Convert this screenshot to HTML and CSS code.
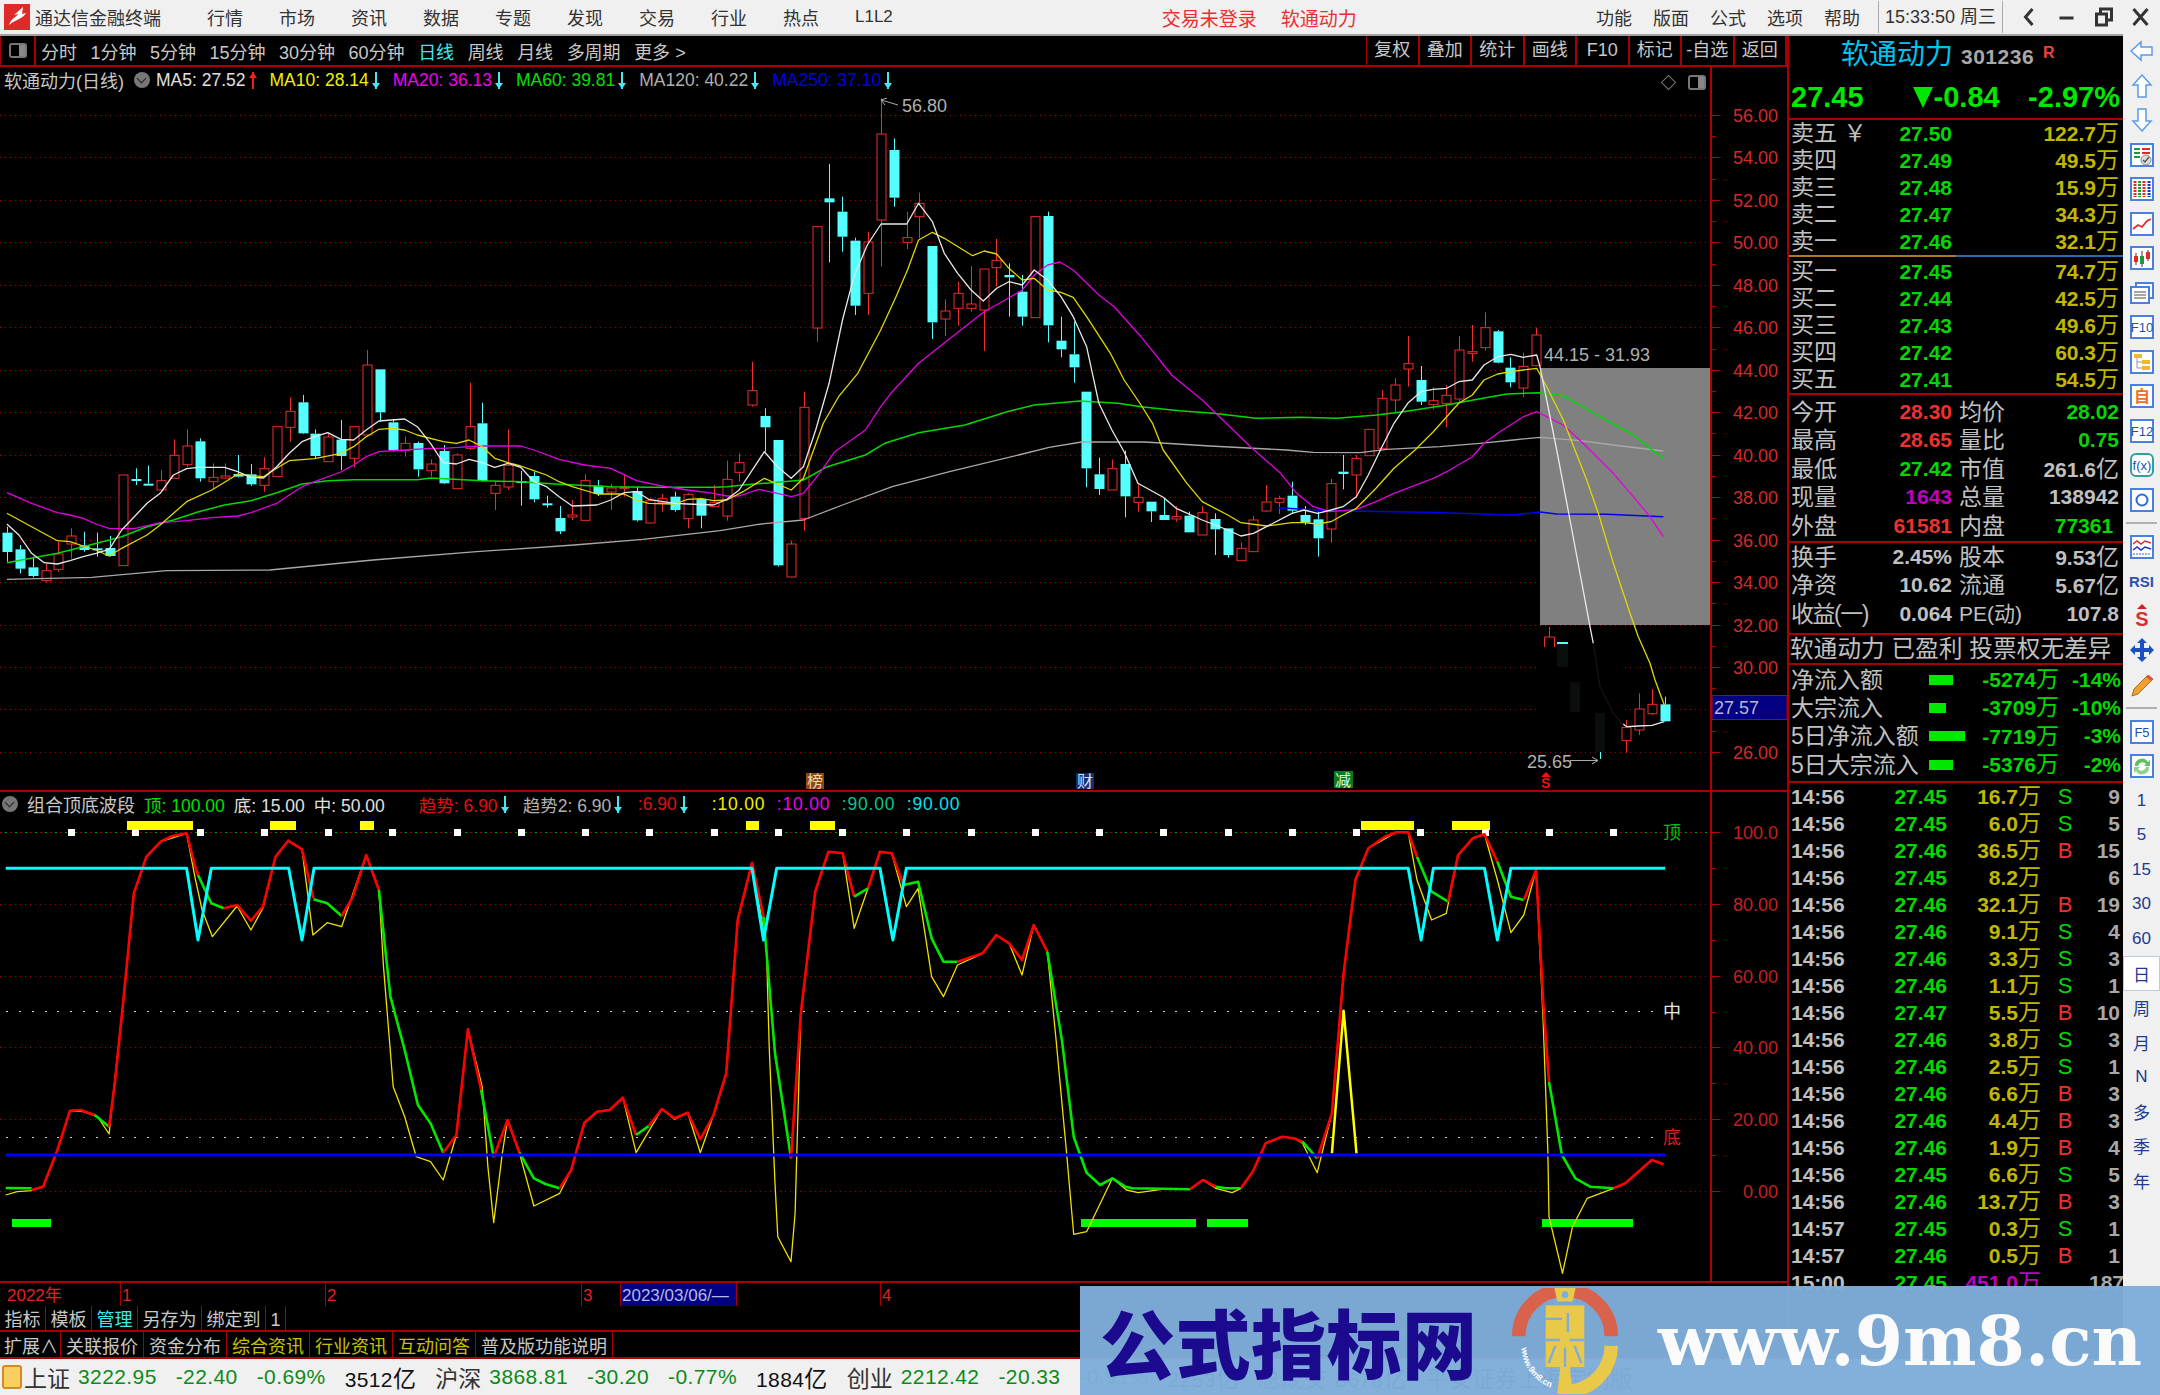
FILE: index.html
```html
<!DOCTYPE html>
<html lang="zh-CN">
<head>
    <meta charset="UTF-8">
    <title>通达信金融终端</title>
    <link rel="stylesheet" href="styles.css">
</head>
<body>
    <header class="titlebar">
        <svg class="app-logo" viewBox="0 0 26 26">
            <rect width="26" height="26" fill="#e02a2a"/>
            <path d="M5 21C8 13 13 13 14 10L10 11L19 3L18 10L22 9C19 15 12 15 5 21Z" fill="#fff"/>
        </svg>
        <span class="app-name">通达信金融终端</span>
        <nav class="menu">
            <span>行情</span><span>市场</span><span>资讯</span><span>数据</span><span>专题</span>
            <span>发现</span><span>交易</span><span>行业</span><span>热点</span><span class="l1l2">L1L2</span>
        </nav>
        <div class="notice"><span>交易未登录</span><span>软通动力</span></div>
        <nav class="menu menu-right">
            <span>功能</span><span>版面</span><span>公式</span><span>选项</span><span>帮助</span>
        </nav>
        <div class="clock">15:33:50 周三</div>
        <div class="win-btns">
            <svg viewBox="0 0 24 24"><path d="M15 4L8 12L15 20" fill="none" stroke="#333" stroke-width="3"/></svg>
            <svg viewBox="0 0 24 24"><path d="M5 13H19" stroke="#333" stroke-width="3"/></svg>
            <svg viewBox="0 0 24 24"><path d="M5 9H15V20H5ZM9 9V4H20V15H15" fill="none" stroke="#333" stroke-width="3"/></svg>
            <svg viewBox="0 0 24 24"><path d="M5 4L19 20M19 4L5 20" stroke="#333" stroke-width="3"/></svg>
        </div>
    </header>

    <main class="workspace">
        <section class="left-col">
            <div class="toolbar">
                <div class="tool-toggle"><i class="panel-ico"></i></div>
                <div class="periods">
                    <span>分时</span><span>1分钟</span><span>5分钟</span><span>15分钟</span><span>30分钟</span><span>60分钟</span>
                    <span class="on">日线</span><span>周线</span><span>月线</span><span>多周期</span><span>更多 &gt;</span>
                </div>
                <div class="tool-right">
                    <span>复权</span><span>叠加</span><span>统计</span><span>画线</span><span>F10</span><span>标记</span><span>-自选</span><span>返回</span>
                </div>
            </div>

            <div class="main-panel">
                <svg id="mainSvg" class="chart" viewBox="0 67 1787 723"></svg>
                <div class="legend main-legend">
                    <span class="legend-name">软通动力(日线)</span>
                    <i class="fold"></i>
                    <span class="ma c-white">MA5: 27.52<i class="up"></i></span>
                    <span class="ma c-yellow">MA10: 28.14<i class="dn"></i></span>
                    <span class="ma c-magenta">MA20: 36.13<i class="dn"></i></span>
                    <span class="ma c-green">MA60: 39.81<i class="dn"></i></span>
                    <span class="ma c-gray">MA120: 40.22<i class="dn"></i></span>
                    <span class="ma c-blue">MA250: 37.10<i class="dn"></i></span>
                </div>
                <i class="diamond"></i>
                <i class="panel-ico panel-ico-chart"></i>
            </div>

            <div class="sub-panel">
                <svg id="subSvg" class="chart" viewBox="0 792 1787 489"></svg>
                <div class="legend sub-legend">
                    <i class="fold"></i>
                    <span class="legend-name">组合顶底波段</span>
                    <span class="c-green">顶: 100.00</span>
                    <span class="c-white">底: 15.00</span>
                    <span class="c-white">中: 50.00</span>
                    <span class="ma trend c-red">趋势: 6.90<i class="dn"></i></span>
                    <span class="ma trend2 c-gray">趋势2: 6.90<i class="dn"></i></span>
                    <span class="ma trend3 c-red">:6.90<i class="dn"></i></span>
                    <span class="line-val c-yellow">:10.00</span>
                    <span class="line-val c-magenta">:10.00</span>
                    <span class="line-val c-teal">:90.00</span>
                    <span class="line-val c-cyan">:90.00</span>
                </div>
            </div>

            <div class="date-row">
                <span class="d1">2022年</span><span class="d2">1</span><span class="d3">2</span><span class="d4">3</span>
                <span class="d-box">2023/03/06/—</span><span class="d5"></span><span class="d6">4</span>
            </div>
            <div class="tabs">
                <span>指标</span><span>模板</span><span class="on">管理</span><span>另存为</span><span>绑定到</span><span>1</span>
            </div>
            <div class="tabs tabs-last">
                <span class="tab-first">扩展∧</span><span>关联报价</span><span>资金分布</span>
                <span class="warn">综合资讯</span><span class="warn">行业资讯</span><span class="warn">互动问答</span>
                <span>普及版功能说明</span>
            </div>
        </section>

        <aside class="quote">
            <div class="q-head">
                <div class="q-title"><b>软通动力</b><span class="q-code">301236</span><sup>R</sup></div>
                <div class="q-price"><span>27.45</span><span class="q-chg"><i class="tri"></i>-0.84</span><span class="q-pct">-2.97%</span></div>
            </div>
            <div class="q-book">
                <div><label>卖五 ￥</label><b class="g">27.50</b><b class="v">122.7<s>万</s></b></div>
                <div><label>卖四</label><b class="g">27.49</b><b class="v">49.5<s>万</s></b></div>
                <div><label>卖三</label><b class="g">27.48</b><b class="v">15.9<s>万</s></b></div>
                <div><label>卖二</label><b class="g">27.47</b><b class="v">34.3<s>万</s></b></div>
                <div><label>卖一</label><b class="g">27.46</b><b class="v">32.1<s>万</s></b></div>
            </div>
            <div class="q-split"></div>
            <div class="q-book">
                <div><label>买一</label><b class="g">27.45</b><b class="v">74.7<s>万</s></b></div>
                <div><label>买二</label><b class="g">27.44</b><b class="v">42.5<s>万</s></b></div>
                <div><label>买三</label><b class="g">27.43</b><b class="v">49.6<s>万</s></b></div>
                <div><label>买四</label><b class="g">27.42</b><b class="v">60.3<s>万</s></b></div>
                <div><label>买五</label><b class="g">27.41</b><b class="v">54.5<s>万</s></b></div>
            </div>
            <div class="q-stats">
                <div><label>今开</label><b class="r">28.30</b><label>均价</label><b class="g">28.02</b></div>
                <div><label>最高</label><b class="r">28.65</b><label>量比</label><b class="g">0.75</b></div>
                <div><label>最低</label><b class="g">27.42</b><label>市值</label><b>261.6<s>亿</s></b></div>
                <div><label>现量</label><b class="m">1643</b><label>总量</label><b>138942</b></div>
                <div><label>外盘</label><b class="r">61581</b><label>内盘</label><b class="g">77361&nbsp;</b></div>
            </div>
            <div class="q-stats q-stats-short">
                <div><label>换手</label><b>2.45%</b><label>股本</label><b>9.53<s>亿</s></b></div>
                <div><label>净资</label><b>10.62</b><label>流通</label><b>5.67<s>亿</s></b></div>
                <div><label class="tight">收益(一)</label><b>0.064</b><label class="pe">PE(动)</label><b>107.8</b></div>
            </div>
            <div class="q-tags">软通动力 已盈利 投票权无差异</div>
            <div class="q-flow">
                <div><label>净流入额</label><i class="bar bar-w24"></i><b class="g">-5274<s>万</s></b><b class="g">-14%</b></div>
                <div><label>大宗流入</label><i class="bar bar-w17"></i><b class="g">-3709<s>万</s></b><b class="g">-10%</b></div>
                <div><label>5日净流入额</label><i class="bar bar-w36"></i><b class="g">-7719<s>万</s></b><b class="g">-3%</b></div>
                <div><label>5日大宗流入</label><i class="bar bar-w24"></i><b class="g">-5376<s>万</s></b><b class="g">-2%</b></div>
            </div>
            <div id="ticks" class="q-ticks"></div>
        </aside>

        <aside class="sidebar">
            <button><svg viewBox="0 0 26 26"><path class="arrow" d="M2 13L12 4V9H23V17H12V22Z"/></svg></button>
            <button><svg viewBox="0 0 26 26"><path class="arrow" d="M13 2L22 12H17V24H9V12H4Z"/></svg></button>
            <button><svg viewBox="0 0 26 26"><path class="arrow" d="M13 24L22 14H17V2H9V14H4Z"/></svg></button>
            <button><svg viewBox="0 0 26 26"><rect class="box" x="2" y="2" width="22" height="22"/><path d="M5 7H11M5 11H11M5 15H11" stroke="#1a9a3a" stroke-width="2"/><path d="M13 7H21M13 11H21" stroke="#e02a2a" stroke-width="2"/><circle cx="17" cy="18" r="5" fill="#ddd" stroke="#888"/><path d="M14 18L16 20L20 15" fill="none" stroke="#555" stroke-width="1.5"/></svg></button>
            <button><svg viewBox="0 0 26 26"><rect class="box" x="2" y="2" width="22" height="22"/><path d="M6 5V21" stroke="#e02a2a" stroke-width="3" stroke-dasharray="2 1"/><path d="M10.500 5V21" stroke="#1a9a3a" stroke-width="3" stroke-dasharray="2 1"/><path d="M15 5V21" stroke="#e02a2a" stroke-width="3" stroke-dasharray="2 1"/><path d="M20 5V21" stroke="#2030d0" stroke-width="3" stroke-dasharray="2 1"/></svg></button>
            <button><svg viewBox="0 0 26 26"><rect class="box" x="2" y="2" width="22" height="22"/><path d="M4 18L9 14L13 16L18 10L22 8" fill="none" stroke="#e02a2a" stroke-width="1.800"/></svg></button>
            <button><svg viewBox="0 0 26 26"><rect class="box" x="2" y="2" width="22" height="22"/><path d="M7 8V20M13 6V22M19 5V16" stroke="#333"/><rect x="5" y="11" width="4" height="6" fill="#e02a2a"/><rect x="11" y="11" width="4" height="8" fill="#1a9a3a"/><rect x="17" y="7" width="4" height="7" fill="#e02a2a"/></svg></button>
            <button><svg viewBox="0 0 26 26"><path class="box" d="M7 7V3H24V18H20"/><rect class="box" x="2" y="7" width="18" height="16"/><path d="M5 12H17M5 15H17M5 18H17" stroke="#888" stroke-width="1.500"/></svg></button>
            <button><svg viewBox="0 0 26 26"><rect class="box" x="2" y="2" width="22" height="22"/><text class="ico-text" x="13" y="18">F10</text></svg></button>
            <button><svg viewBox="0 0 26 26"><rect class="box" x="2" y="2" width="22" height="22"/><path d="M8 8V19H13M8 13H13" fill="none" stroke="#999"/><rect x="5" y="5" width="8" height="4" fill="#f0b830"/><rect x="13" y="11" width="8" height="4" fill="#f0b830"/><rect x="13" y="17" width="8" height="4" fill="#f0b830"/></svg></button>
            <button><svg viewBox="0 0 26 26"><rect class="box" x="2" y="2" width="22" height="22"/><text class="ico-text ico-self" x="13" y="19">自</text></svg></button>
            <button><svg viewBox="0 0 26 26"><rect class="box" x="2" y="2" width="22" height="22"/><text class="ico-text" x="13" y="18">F12</text></svg></button>
            <button><svg viewBox="0 0 26 26"><rect class="box box-teal" x="2" y="2" width="22" height="22" rx="5"/><text class="ico-text" x="13" y="18">f(x)</text></svg></button>
            <button><svg viewBox="0 0 26 26"><rect class="box" x="2" y="2" width="22" height="22"/><circle cx="13" cy="13" r="5.500" fill="none" stroke="#2a6ad0" stroke-width="2"/></svg></button>
            <hr>
            <button><svg viewBox="0 0 26 26"><rect class="box" x="2" y="2" width="22" height="22"/><path d="M4 10L8 7L12 10L16 7L22 9" fill="none" stroke="#e02a2a" stroke-width="1.500"/><path d="M4 16L8 13L12 16L16 13L22 15" fill="none" stroke="#2030d0" stroke-width="1.500"/><path d="M4 20H22" stroke="#2a6ad0" stroke-dasharray="2 1"/></svg></button>
            <button><span class="ico-rsi">RSI</span></button>
            <button><svg viewBox="0 0 26 26"><path d="M13 1L18 6H8Z" fill="#d02020"/><text class="ico-s" x="13" y="23">S</text></svg></button>
            <button><svg viewBox="0 0 26 26"><path d="M13 1L18 6H15V11H20V8L25 13L20 18V15H15V20H18L13 25L8 20H11V15H6V18L1 13L6 8V11H11V6H8Z" fill="#1a50c0"/></svg></button>
            <button><svg viewBox="0 0 26 26"><path d="M19 3L24 7L9 22L3 24L5 17Z" fill="#f0a030" stroke="#a87020"/><path d="M19 3L24 7L22 9L17 5Z" fill="#e05050"/></svg></button>
            <hr>
            <button><svg viewBox="0 0 26 26"><rect class="box" x="2" y="2" width="22" height="22"/><text class="ico-text" x="13" y="18">F5</text></svg></button>
            <button><svg viewBox="0 0 26 26"><rect class="box" x="2" y="2" width="22" height="22"/><path d="M6 13A7 7 0 0 1 19 9L21 7V13H15L17 11A4.500 4.500 0 0 0 9 13Z" fill="#60c060"/><path d="M20 14A7 7 0 0 1 7 18L5 20V14H11L9 16A4.500 4.500 0 0 0 17 14Z" fill="#90d090"/></svg></button>
            <button class="txt">1</button><button class="txt">5</button><button class="txt">15</button>
            <button class="txt">30</button><button class="txt">60</button><button class="txt on">日</button>
            <button class="txt">周</button><button class="txt">月</button><button class="txt">N</button>
            <button class="txt">多</button><button class="txt">季</button><button class="txt">年</button>
        </aside>
    </main>

    <footer class="statusbar">
        <i class="status-ico"></i>
        <span class="idx">上证</span><b class="down">3222.95</b><b class="down">-22.40</b><b class="down">-0.69%</b><b>3512<s>亿</s></b>
        <span class="idx">沪深</span><b class="down">3868.81</b><b class="down">-30.20</b><b class="down">-0.77%</b><b>1884<s>亿</s></b>
        <span class="idx">创业</span><b class="down">2212.42</b><b class="down">-20.33</b><b class="down">-0.91%</b><b>2253<s>亿</s></b>
        <span class="idx">总成交</span><b>8678<s>亿</s></b><span class="idx">平安证券上海定制版</span>
    </footer>

    <div class="watermark">
        <span class="wm-cn">公式指标网</span>
        <svg class="wm-logo" viewBox="0 0 110 110">
            <path d="M7 50A48 48 0 0 1 103 50" fill="none" stroke="#d9624c" stroke-width="14"/>
            <path d="M103 60A48 48 0 0 1 62 107" fill="none" stroke="#e8c94a" stroke-width="14"/>
            <path id="wmArc" d="M10 62A46 46 0 0 0 46 105" fill="none"/>
            <text class="wm-arc-text"><textPath href="#wmArc">www.9m8.cn</textPath></text>
            <path d="M44 0H66L63 14H47Z" fill="#e8c94a"/>
            <circle cx="55" cy="7" r="3.500" fill="#7fadda"/>
            <rect x="35" y="18" width="40" height="64" fill="#e8c94a"/>
            <path d="M47 110L50 82H60L63 110Z" fill="#e8c94a"/>
            <path d="M35 32H52M58 26V46M35 54H50M60 54H75M45 60L38 78M65 60L72 78M55 62V82" stroke="#7fadda" stroke-width="2.500"/>
        </svg>
        <span class="wm-url">www.9m8.cn</span>
    </div>

    <script src="chart.js"></script>
</body>
</html>
```

FILE: styles.css
```css
* {
    box-sizing: border-box;
}

body {
    margin: 0;
    width: 2160px;
    height: 1395px;
    overflow: hidden;
    position: relative;
    background-color: #000;
    font-family: "Liberation Sans", "Noto Sans CJK SC", sans-serif;
    font-size: 18px;
    color: #c8c8c8;
}

s {
    text-decoration: none;
    font-weight: 400;
}

/* title bar */
.titlebar {
    display: flex;
    align-items: center;
    height: 36px;
    padding-left: 4px;
    background-color: #f0f0f0;
    border-bottom: 2px solid #a0a0a0;
    color: #333;
}

.app-logo {
    width: 26px;
    height: 26px;
}

.app-name {
    margin-left: 5px;
}

.menu {
    display: flex;
    gap: 36px;
    margin-left: 46px;
}

.l1l2 {
    padding-top: 3px;
    font-size: 17px;
}

.menu-right {
    gap: 21px;
    margin-left: auto;
}

.notice {
    display: flex;
    gap: 24px;
    margin-left: 269px;
    font-size: 19px;
    color: #e83030;
}

.clock {
    width: 125px;
    height: 32px;
    line-height: 32px;
    margin-left: 18px;
    text-align: center;
    font-size: 18px;
    border-left: 1px solid #aaa;
    border-right: 1px solid #aaa;
    white-space: nowrap;
}

.win-btns {
    display: flex;
    width: 157px;
    padding-left: 8px;
}

.win-btns svg {
    width: 37px;
    height: 24px;
}

/* layout */
.workspace {
    display: flex;
    height: 1323px;
}

.left-col {
    width: 1787px;
    flex: none;
}

/* toolbar */
.toolbar {
    display: flex;
    align-items: center;
    height: 31px;
    border-bottom: 2px solid #a80000;
}

.tool-toggle {
    width: 36px;
    height: 29px;
    display: flex;
    align-items: center;
    justify-content: center;
    border-left: 1px solid #a80000;
    border-right: 2px solid #a80000;
}

.panel-ico {
    display: block;
    width: 18px;
    height: 15px;
    border: 2px solid #777;
    border-radius: 3px;
    background: linear-gradient(90deg, #000 55%, #888 55%);
}

.periods {
    display: flex;
    gap: 13.500px;
    margin-left: 5px;
}

.periods .on {
    color: #3fe8ee;
}

.tool-right {
    display: flex;
    margin-left: auto;
    height: 29px;
    border-left: 1px solid #a80000;
}

.tool-right span {
    width: 52.5px;
    line-height: 28px;
    text-align: center;
    border-right: 2px solid #a80000;
}

/* chart panels */
.main-panel,
.sub-panel {
    position: relative;
    border-bottom: 2px solid #a80000;
}

.main-panel {
    height: 725px;
}

.sub-panel {
    height: 491px;
}

.chart {
    display: block;
    width: 1787px;
    height: 100%;
}

.chart text {
    font-family: "Liberation Sans", "Noto Sans CJK SC", sans-serif;
    font-size: 18px;
}

.legend {
    position: absolute;
    top: 0;
    left: 4px;
    display: flex;
    align-items: center;
    gap: 16px;
    font-size: 17.500px;
    white-space: nowrap;
}

.legend-name {
    font-size: 18px;
}

.main-legend .fold {
    margin-left: -6px;
    margin-right: -10px;
}

.sub-legend {
    top: -1px;
    left: 2px;
    gap: 9px;
}

/* fixed widths keep the value columns on their own spots */
.trend {
    flex: none;
    width: 95px;
    margin-left: 25px;
}

.trend2 {
    flex: none;
    width: 106px;
}

.trend3 {
    flex: none;
    width: 65px;
}

.line-val {
    flex: none;
    width: 56px;
    letter-spacing: 0.8px;
}

.fold {
    display: block;
    width: 16px;
    height: 16px;
    border-radius: 50%;
    background-color: #777;
    position: relative;
}

.fold::after {
    content: "";
    position: absolute;
    left: 4px;
    top: 3px;
    width: 6px;
    height: 6px;
    border-right: 1.500px solid #222;
    border-bottom: 1.500px solid #222;
    transform: rotate(45deg);
}

.ma {
    display: flex;
    align-items: center;
    gap: 6px;
}

.up,
.dn {
    display: block;
    position: relative;
    flex: none;
    width: 2px;
    height: 17px;
}

.up {
    background-color: #f02020;
}

.dn {
    background-color: #45e8f0;
}

.up::after,
.dn::after {
    content: "";
    position: absolute;
    left: -3px;
    border-left: 4px solid transparent;
    border-right: 4px solid transparent;
}

.up::after {
    top: 0;
    border-bottom: 6px solid #f02020;
}

.dn::after {
    bottom: 0;
    border-top: 6px solid #45e8f0;
}

.c-white { color: #e0e0e0; }
.c-yellow { color: #f0f000; }
.c-magenta { color: #f000f0; }
.c-green { color: #00e000; }
.c-gray { color: #b0b0b0; }
.c-blue { color: #0000e0; }
.c-red { color: #e01010; }
.c-teal { color: #00c890; }
.c-cyan { color: #00e0f0; }

.diamond {
    position: absolute;
    left: 1663px;
    top: 10px;
    width: 11px;
    height: 11px;
    border: 1px solid #777;
    transform: rotate(45deg);
}

.panel-ico-chart {
    position: absolute;
    left: 1688px;
    top: 8px;
}

/* date axis and tab rows */
.date-row {
    display: flex;
    height: 23px;
    line-height: 26px;
    color: #e02020;
    font-size: 17px;
    overflow: hidden;
}

.date-row span {
    padding-left: 1px;
    border-right: 1px solid #a80000;
}

.d1 { width: 121px; padding-left: 7px !important; }
.d2 { width: 205px; }
.d3 { width: 256px; }
.d4 { width: 39px; }
.d-box { width: 116px; background-color: #000080; color: #b8b8e0; white-space: nowrap; }
.d5 { width: 144px; }
.d6 { flex: 1; border-right: none !important; }

.tabs {
    display: flex;
    height: 26px;
    border-bottom: 2px solid #a80000;
    line-height: 28px;
    overflow: hidden;
}

.tabs-last {
    height: 27px;
    line-height: 30px;
}

.tabs span {
    padding: 0 4.500px;
    border-right: 1px solid #a80000;
    white-space: nowrap;
}

.tabs-last span {
    padding: 0 5px;
}

.tabs .tab-first {
    padding: 0 2px 0 4px;
}

.tabs .on {
    color: #3fe8ee;
}

.tabs .warn {
    color: #c8c000;
}

/* quote panel */
.quote {
    width: 336px;
    flex: none;
    border-left: 2px solid #a80000;
    overflow: hidden;
    font-size: 23px;
    color: #c0c0c0;
}

.quote label {
    white-space: nowrap;
}

.quote b {
    font-size: 21px;
    text-align: right;
    white-space: nowrap;
}

.quote s {
    font-size: 23px;
}

.q-head {
    height: 84px;
    border-bottom: 2px solid #a80000;
}

.q-title {
    display: flex;
    align-items: baseline;
    height: 38px;
    padding-left: 52px;
    line-height: 38px;
}

.q-title b {
    font-size: 28px;
    font-weight: 400;
    color: #00c4f0;
}

.q-code {
    margin-left: 8px;
    font-size: 21px;
    font-weight: 700;
    letter-spacing: 0.5px;
    color: #a8a8a8;
}

.q-title sup {
    margin-left: 9px;
    font-size: 16px;
    font-weight: 700;
    color: #f04040;
    line-height: 0;
    position: relative;
    top: -6px;
    vertical-align: baseline;
}

.q-price {
    display: flex;
    padding: 4px 3px 0 2px;
    font-size: 29px;
    font-weight: 700;
    color: #00e800;
    line-height: 38px;
}

.q-chg {
    display: flex;
    align-items: center;
    margin-left: 49px;
}

.q-pct {
    margin-left: auto;
}

.tri {
    display: block;
    margin-right: 1px;
    border-left: 10px solid transparent;
    border-right: 10px solid transparent;
    border-top: 21px solid #00e800;
}

.q-book div {
    display: grid;
    grid-template-columns: 90px 71px 167px;
    height: 27px;
    line-height: 27px;
    padding-left: 2px;
}

.q-book {
    height: 135px;
}

.q-split {
    height: 2px;
    background: linear-gradient(90deg, #b07820 50%, #2a6aa8 50%);
}

.q-split + .q-book {
    height: 138px;
    border-bottom: 2px solid #a80000;
    padding-top: 1px;
}

.g { color: #00d800; }
.r { color: #f03030; }
.m { color: #c000c0; }
.v { color: #c0b800; }

.q-stats {
    height: 148px;
    padding-top: 3px;
    border-bottom: 2px solid #a80000;
}

.q-stats div {
    display: grid;
    grid-template-columns: 90px 71px 66px 101px;
    height: 28.400px;
    line-height: 28.400px;
    padding-left: 2px;
}

.q-stats label:nth-of-type(2) {
    padding-left: 7px;
}

.q-stats-short {
    height: 92px;
    padding-top: 0;
}

.tight {
    letter-spacing: -1.500px;
}

.pe {
    font-size: 21px;
}

.q-tags {
    height: 30px;
    line-height: 28px;
    padding-left: 1px;
    font-size: 23.500px;
    letter-spacing: 0.2px;
    border-bottom: 2px solid #a80000;
    white-space: nowrap;
}

.q-flow {
    height: 118px;
    border-bottom: 2px solid #a80000;
}

.q-flow div {
    display: grid;
    grid-template-columns: 138px 40px 90px 62px;
    align-items: center;
    height: 28.400px;
    line-height: 28.400px;
    padding-left: 2px;
}

.bar {
    display: block;
    height: 10px;
    background-color: #00e800;
}

.bar-w24 { width: 24px; }
.bar-w17 { width: 17px; }
.bar-w36 { width: 36px; }

.q-ticks div {
    display: grid;
    grid-template-columns: 60px 96px 94px 48px 31px;
    height: 27px;
    line-height: 27px;
    padding-left: 2px;
}

.q-ticks .t {
    text-align: left;
}

.q-ticks .bs {
    text-align: center;
    font-size: 22px;
    font-weight: 400;
}

.q-ticks .n {
    color: #a8a8a8;
}

/* right icon strip */
.sidebar {
    width: 37px;
    flex: none;
    margin-top: -2px;
    background-color: #f0f0f0;
    height: 1325px;
}

.sidebar button {
    display: flex;
    align-items: center;
    justify-content: center;
    width: 37px;
    height: 34.500px;
    padding: 0;
    border: none;
    background: none;
    color: #203a90;
    font-family: inherit;
    font-size: 17px;
}

.sidebar svg {
    width: 26px;
    height: 26px;
}

.sidebar hr {
    height: 2px;
    margin: 5px 3px 5.500px;
    border: none;
    background-color: #b0b0b0;
}

.sidebar .on {
    background-color: #fff;
    border: 1px solid #c0c8e0;
}

.arrow {
    fill: #fff;
    stroke: #5a9ae8;
    stroke-width: 1.500;
}

.box {
    fill: #fff;
    stroke: #4a80e0;
    stroke-width: 2;
}

.box-teal {
    stroke: #30a0a0;
}

.ico-text {
    font-family: "Liberation Sans", sans-serif;
    font-size: 13px;
    text-anchor: middle;
    fill: #2050b0;
}

.ico-self {
    font-family: "Noto Sans CJK SC", sans-serif;
    font-size: 16px;
    font-weight: 700;
    fill: #f07020;
}

.ico-rsi {
    font-size: 15px;
    font-weight: 700;
    color: #3050b0;
}

.ico-s {
    font-family: "Liberation Sans", sans-serif;
    font-size: 20px;
    font-weight: 700;
    text-anchor: middle;
    fill: #d83030;
}

/* status bar */
.statusbar {
    display: flex;
    align-items: center;
    gap: 19px;
    height: 36px;
    padding-left: 2px;
    background-color: #f0f0f0;
    color: #111;
    white-space: nowrap;
}

.statusbar b {
    font-size: 21px;
    font-weight: 400;
    letter-spacing: 0.4px;
}

.statusbar s {
    font-size: 23px;
}

.statusbar .down {
    color: #0c8a18;
}

.status-ico {
    display: block;
    width: 20px;
    height: 24px;
    margin-right: -17px;
    border: 2px solid #d88a20;
    border-radius: 3px;
    background-color: #f8d060;
}

.idx {
    margin-right: -11px;
    font-size: 23px;
    color: #333;
}

/* watermark strip */
.watermark {
    position: absolute;
    left: 1080px;
    top: 1286px;
    width: 1080px;
    height: 109px;
    display: flex;
    align-items: center;
    background-color: rgba(127, 173, 218, 0.97);
}

.wm-cn {
    flex: none;
    margin-left: 20px;
    width: 372px;
    font-family: "Noto Sans CJK SC", sans-serif;
    font-size: 75px;
    font-weight: 900;
    letter-spacing: 0.5px;
    line-height: 1;
    color: #1c0a8e;
    white-space: nowrap;
}

.wm-logo {
    width: 108px;
    height: 106px;
    margin-left: 39px;
}

.wm-arc-text {
    font-family: "Liberation Sans", sans-serif;
    font-size: 9px;
    font-weight: 700;
    fill: #fff;
}

.wm-url {
    margin-left: 39px;
    font-family: "DejaVu Serif", serif;
    font-size: 69.500px;
    font-weight: 700;
    color: #fafafa;
    white-space: nowrap;
}
```

FILE: chart.js
```js
// Traced data. Y values and X values are in the units of the three chart spans below,
// t() turns them back into page pixels.
const spanA = { ox: 0, sx: 1.742, oy: 340 };
const spanB = { ox: 720, sx: 2.613, oy: 90 };
const spanC = { ox: 1280, sx: 3, oy: 300 };
const spanD = { ox: 0, sx: 1.742, oy: 800 };
const spanE = { ox: 880, sx: 1.704, oy: 800 };

const RED = "#ee2c2c";
const CYAN = "#55ffff";
const STEP = 12.85;

function t(span, pts) {
    return pts.map(p => [span.ox + p[0] / span.sx, span.oy + p[1] / 3]);
}

function line(pts, color, width) {
    const d = pts.map(p => p[0].toFixed(1) + "," + p[1].toFixed(1)).join(" ");
    return `<polyline points="${d}" fill="none" stroke="${color}" stroke-width="${width}" stroke-linejoin="round"/>`;
}

function hline(y, x1, x2, color, dash, offset) {
    return `<line x1="${x1}" x2="${x2}" y1="${y}" y2="${y}" stroke="${color}" stroke-dasharray="${dash}" stroke-dashoffset="${offset || 0}" shape-rendering="crispEdges"/>`;
}

function label(x, y, text, color, extra) {
    return `<text x="${x}" y="${y}" fill="${color}" ${extra || ""}>${text}</text>`;
}

// [color, wick top, body top, body bottom, wick bottom]
const candlesA = [
    ["c",560,578,636,665],["c",615,628,686,700],["c",650,682,708,712],["r",670,692,722,728],["r",605,642,688,695],
    ["r",565,588,612,655],["c",575,616,630,635],["c",578,625,628,650],["c",588,624,648,650],["r",405,405,677,677],
    ["c",385,417,420,435],["c",377,431,433,435],["r",390,422,450,452],["r",298,346,415,415],["r",268,318,374,380],
    ["c",295,304,415,425],["r",370,412,425,445],["r",370,408,414,415],["c",345,402,410,412],["c",372,403,433,438],
    ["r",352,386,436,455],["r",260,260,410,410],["r",172,214,262,305],["c",165,187,280,282],["c",268,281,348,355],
    ["r",280,291,365,366],["c",240,299,348,390],["r",260,260,355,382],["r",30,75,285,290],["c",88,88,217,245],
    ["c",237,247,331,335],["r",290,310,332,350],["c",305,309,388,410],["r",358,372,392,410],["c",315,333,430,432],
    ["r",340,345,446,447],["r",128,260,325,330],["c",188,250,423,425],["r",425,436,460,510],["r",268,376,441,450],
    ["c",393,423,427,497],["c",395,408,478,487],["c",467,490,492,503],["c",498,534,574,582],["r",480,525,531,540],
    ["r",403,422,541,542],["c",420,437,462,468],["r",432,444,456,510],["r",405,442,445,470],["c",440,453,541,545],
    ["r",475,482,549,550],["r",462,476,488,515],["c",455,470,510,515],["r",460,463,536,565],["c",475,477,527,565],
    ["r",435,487,500,502]
];
const candlesB = [
    ["r",1112,1168,1278,1292],["r",1090,1118,1147,1175],["r",815,902,945,950],["c",955,978,1012,1085],["c",1050,1050,1426,1430],
    ["r",1352,1362,1461,1462],["r",905,952,1285,1322],["r",410,410,714,755],["c",222,325,337,517],["c",320,365,440,485],
    ["c",443,452,647,675],["r",425,456,610,675],["r",25,132,390,530],["c",145,180,323,350],["r",365,443,457,477],
    ["r",308,340,380,445],["c",468,468,697,747],["r",628,663,687,738],["r",575,610,655,707],["r",528,642,655,665],
    ["r",537,537,660,783],["r",447,511,533,590],["c",520,555,562,680],["c",555,605,680,707],["r",380,380,683,683],
    ["c",365,378,706,757],["c",680,752,778,802],["c",695,793,832,878],["c",905,905,1135,1192],["c",1103,1153,1197,1215],
    ["r",1108,1136,1200,1200],["c",1082,1122,1219,1282],["r",1183,1222,1237,1265],["c",1235,1235,1264,1296],["c",1225,1275,1290,1290],
    ["r",1248,1280,1287,1295],["c",1265,1277,1327,1327],["r",1248,1268,1335,1335],["c",1270,1287,1318,1395],["c",1315,1315,1395,1403],
    ["r",1357,1375,1412,1412],["r",1278,1290,1385,1385],["r",1185,1236,1263,1265],["r",1217,1225,1237,1272]
];
const candlesC = [
    ["c",545,587,632,640],["c",618,645,668,675],["c",635,658,715,770],["r",537,551,687,728],["c",465,515,522,568],
    ["r",465,475,525,595],["r",388,388,467,467],["r",270,295,445,445],["r",235,255,300,340],["r",108,191,207,260],
    ["c",198,240,305,315],["r",262,302,314,328],["r",255,286,310,382],["r",108,150,297,305],["r",75,155,160,185],
    ["r",37,83,143,152],["c",90,94,188,190],["c",172,203,247,262],["r",158,199,264,292],["r",83,105,197,197]
];
const candlesTail = [
    [126,"r",1260,1282,1322,1358],[127,"r",1180,1227,1290,1305],[128,"r",1167,1213,1241,1245],[129,"c",1190,1213,1264,1265]
];

function candle(i, c, wt, bt, bb, wb, oy) {
    const x = Math.round(7 + STEP * i) + 0.5;
    const [yt, yb, yw1, yw2] = [bt, bb, wt, wb].map(v => oy + v / 3);
    const col = c === "r" ? RED : CYAN;
    let s = `<path d="M${x} ${yw1}V${yt}M${x} ${yb}V${yw2}" stroke="${col}"/>`;
    if (c === "r") {
        s += `<rect x="${x - 4.5}" y="${yt}" width="9" height="${Math.max(yb - yt, 1)}" fill="#000" stroke="${col}"/>`;
    } else {
        s += `<rect x="${x - 5}" y="${yt}" width="10" height="${Math.max(yb - yt, 2)}" fill="${col}"/>`;
    }
    return s;
}

function priceY(p) {
    return 115 + (56 - p) * 21.23;
}

const ma5 = [
    ...t(spanA, [[12,552],[33,585],[55,640],[77,668],[100,672],[122,662],[145,650],[167,640],[190,628],[212,570],[234,530],[256,490],[279,460],[302,405],[325,386],[346,382],[391,382],[414,395],[437,412],[459,414],[482,380],[504,340],[526,305],[548,290],[571,278],[594,298],[616,300],[638,270],[660,243],[682,240],[705,237],[727,260],[750,310],[772,368],[795,372],[817,358],[840,368],[862,382],[885,370],[907,382],[930,425],[952,440],[974,470],[997,498],[1040,495],[1064,480],[1087,458],[1109,455],[1130,478],[1175,490],[1198,492],[1243,495]]),
    ...t(spanB, [[18,1228],[50,1200],[116,1085],[150,1130],[186,1165],[218,1130],[250,1020],[285,880],[320,690],[350,560],[385,465],[421,402],[488,402],[519,340],[555,395],[586,490],[621,550],[656,600],[688,633],[723,595],[755,575],[790,585],[821,540],[856,570],[891,620],[923,680],[958,770],[990,940],[1024,1020],[1056,1085],[1092,1180],[1158,1222],[1192,1255],[1260,1290],[1327,1320],[1361,1338],[1394,1330],[1428,1310]]),
    ...t(spanC, [[36,640],[72,630],[113,640],[153,630],[189,620],[229,590],[265,525],[306,440],[342,370],[383,310],[423,275],[459,268],[500,265],[536,245],[577,240],[612,195],[653,170],[693,163],[730,172],[770,165],[780,200],[800,300],[830,450],[870,660],[900,820],[930,980],[940,1030]])
];
const ma5Dark = t(spanC, [[940,1030],[960,1160],[1000,1240],[1030,1275]]);
const ma5End = t(spanC, [[1030,1272],[1040,1280],[1076,1278],[1116,1276],[1153,1265]]);

const ma10 = [
    ...t(spanA, [[12,520],[55,560],[100,602],[122,605],[145,618],[167,630],[190,648],[212,625],[256,585],[279,555],[325,485],[369,450],[414,403],[459,410],[482,385],[504,362],[548,356],[594,340],[616,320],[638,290],[660,268],[682,265],[705,270],[727,285],[772,305],[795,310],[817,300],[840,320],[862,355],[885,368],[907,378],[930,392],[952,405],[974,425],[997,440],[1040,462],[1087,462],[1109,480],[1130,490],[1175,492],[1198,478],[1222,476],[1243,482]]),
    ...t(spanB, [[18,1230],[60,1205],[116,1165],[186,1200],[218,1165],[270,1000],[310,920],[360,850],[420,720],[460,620],[490,540],[519,450],[555,427],[586,445],[660,497],[690,483],[723,492],[755,535],[790,570],[821,565],[856,600],[891,607],[923,622],[958,680],[1020,790],[1056,870],[1100,945],[1130,1000],[1158,1080],[1220,1180],[1260,1235],[1327,1275],[1361,1298],[1428,1308]]),
    ...t(spanC, [[36,668],[72,668],[113,672],[153,665],[189,645],[229,625],[288,565],[342,505],[405,450],[460,395],[500,350],[536,310],[577,285],[612,240],[653,222],[693,215],[730,210],[770,205],[800,260],[850,360],[885,450],[920,540],[955,640],[1000,790],[1050,940],[1075,1010],[1110,1090],[1125,1140],[1153,1215]])
];
const ma20 = [
    ...t(spanA, [[12,458],[55,490],[100,518],[122,525],[145,535],[167,552],[190,565],[234,566],[279,548],[325,542],[369,533],[414,528],[437,518],[482,490],[526,440],[548,425],[594,396],[616,375],[638,350],[660,335],[705,330],[750,325],[772,325],[817,320],[840,318],[907,318],[930,330],[974,358],[1018,375],[1064,385],[1109,422],[1153,438],[1198,450],[1243,460]]),
    ...t(spanB, [[18,1218],[50,1218],[100,1198],[150,1210],[186,1220],[218,1210],[260,1150],[300,1085],[380,1020],[420,950],[450,905],[519,820],[590,755],[690,665],[745,630],[790,600],[821,555],[856,525],[888,516],[923,540],[990,615],[1030,650],[1100,740],[1180,855],[1260,930],[1390,1075]]),
    ...t(spanC, [[0,518],[50,580],[100,620],[150,635],[229,628],[288,605],[342,580],[460,535],[500,515],[577,470],[612,430],[653,400],[730,350],[770,335],[850,375],[920,440],[1000,520],[1060,590],[1110,650],[1150,710]])
];
const ma60 = [
    ...t(spanA, [[12,668],[100,640],[145,620],[212,590],[256,560],[302,540],[346,515],[391,495],[437,482],[482,458],[526,432],[571,422],[616,419],[727,419],[750,414],[840,422],[907,425],[974,433],[1064,440],[1130,442],[1243,442]]),
    ...t(spanB, [[18,1190],[60,1185],[150,1177],[218,1170],[280,1130],[380,1095],[430,1060],[519,1028],[640,1005],[750,965],[821,945],[940,933],[1040,940],[1100,950],[1200,962],[1290,970],[1400,985]]),
    ...t(spanC, [[60,352],[170,355],[290,345],[370,335],[500,315],[580,300],[680,282],[780,278],[850,287],[960,350],[1060,405],[1110,445],[1150,475]])
];
const ma120 = [
    ...t(spanA, [[12,718],[160,712],[290,692],[470,690],[650,660],[830,635],[1000,615],[1120,598]]),
    ...t(spanB, [[0,1322],[100,1303],[218,1290],[320,1245],[450,1190],[600,1145],[780,1095],[860,1072],[945,1056],[1110,1056],[1280,1068],[1480,1080]]),
    ...t(spanC, [[100,457],[240,458],[320,448],[480,440],[600,430],[700,420],[780,412],[900,422],[1000,435],[1150,453]])
];
const ma250 = t(spanC, [[-6,623],[150,632],[440,637],[700,645],[780,636],[830,642],[980,643],[1150,650]]);

function drawMain() {
    let s = "";
    for (let p = 26; p <= 56; p += 2) {
        s += hline(Math.round(priceY(p)) + 0.5, 0, 1710, "#a80000", "1 4");
    }
    s += `<rect x="1540" y="368" width="170" height="257" fill="#808080"/>`;
    s += `<rect x="1540" y="626" width="82" height="94" fill="#000"/>`;

    candlesA.forEach((c, i) => s += candle(i, ...c, 340));
    candlesB.forEach((c, i) => s += candle(i + 56, ...c, 90));
    candlesC.forEach((c, i) => s += candle(i + 100, ...c, 300));
    candlesTail.forEach(c => s += candle(c[0], c[1], c[2], c[3], c[4], c[5], 300));

    // what is left of the candles behind the black patch
    s += `<path d="M1549.500 627V637M1544.500 647V637H1554.500V647" fill="none" stroke="${RED}"/>`;
    s += `<rect x="1557" y="642" width="11" height="2" fill="${CYAN}"/>`;
    s += `<rect x="1557" y="644" width="11" height="23" fill="#0a0e0e"/>`;
    s += `<rect x="1570" y="682" width="10" height="30" fill="#0a0e0e"/>`;
    s += `<rect x="1595" y="713" width="10" height="39" fill="#0a0e0e"/>`;
    s += `<path d="M1600.500 752V759" stroke="${CYAN}"/>`;

    s += line(ma120, "#a8a8a8", 1.3);
    s += line(ma60, "#00d800", 1.5);
    s += line(ma250, "#0000e8", 1.6);
    s += line(ma20, "#e000e0", 1.3);
    s += line(ma10, "#e0d800", 1.3);
    s += line(ma5, "#e8e8e8", 1.3);
    s += line(ma5Dark, "#141414", 1.3);
    s += line(ma5End, "#e8e8e8", 1.3);

    // right axis
    s += `<path d="M1711 67V790" stroke="#b00000" stroke-width="2"/>`;
    for (let p = 26; p <= 56; p += 1) {
        const y = Math.round(priceY(p)) + 0.5;
        s += `<path d="M1712 ${y}H${p % 2 === 0 ? 1720 : 1716}" stroke="#b00000"/>`;
        if (p % 2 === 0) s += label(1778, y + 6.5, p.toFixed(2), "#d42a2a", 'text-anchor="end"');
    }
    s += `<rect x="1712" y="695.500" width="75" height="24" fill="#000080" stroke="#b00000"/>`;
    s += label(1714, 714, "27.57", "#b8b8d8");

    s += `<path d="M881 100L898 105M881 100L887 98M881 100L885 105" fill="none" stroke="#aaa"/>`;
    s += label(902, 112, "56.80", "#b0b0b0");
    s += label(1544, 361, "44.15 - 31.93", "#b0b0b0");
    s += label(1527, 768, "25.65", "#b0b0b0");
    s += `<path d="M1570 760.500H1598M1598 760.500L1592 757M1598 760.500L1592 764" fill="none" stroke="#aaa"/>`;

    // event markers along the bottom
    s += `<rect x="806" y="773" width="18" height="16" fill="#8a4a10"/>` + label(807, 787, "榜", "#e8d8b0", 'style="font-size:16px"');
    s += `<rect x="1076" y="773" width="18" height="16" fill="#103070"/>` + label(1077, 787, "财", "#d8e0f8", 'style="font-size:16px"');
    s += `<rect x="1334" y="771" width="19" height="17" fill="#0a7a20"/>` + label(1335, 786, "减", "#d8f8d8", 'style="font-size:16px"');
    s += `<path d="M1546 772L1551 777H1541Z" fill="#f01010"/>` + label(1541, 788, "S", "#f01010", 'style="font-size:14px;font-weight:700"');

    document.getElementById("mainSvg").innerHTML = s;
}

// main oscillator, alternating red and green runs
const oscRuns = [
    ["g", spanD, [[10,1164],[55,1165]]],
    ["r", spanD, [[55,1170],[75,1160],[100,1050],[122,932],[140,930],[165,945]]],
    ["g", spanD, [[165,945],[190,980]]],
    ["r", spanD, [[190,980],[200,850],[215,600],[233,280],[255,170],[280,125],[300,108],[325,100],[340,200],[345,225]]],
    ["g", spanD, [[345,225],[368,310],[390,325]]],
    ["r", spanD, [[390,325],[413,315],[437,362],[458,320],[480,170],[502,122],[526,148],[546,295]]],
    ["g", spanD, [[546,298],[570,310],[595,348]]],
    ["r", spanD, [[595,348],[615,290],[638,165],[660,270]]],
    ["g", spanD, [[660,270],[680,590],[705,750],[728,915],[750,970],[772,1058]]],
    ["r", spanD, [[772,1058],[795,1005],[815,688],[838,870]]],
    ["g", spanD, [[838,870],[860,1072]]],
    ["r", spanD, [[860,1072],[884,960],[905,1058]]],
    ["g", spanD, [[905,1058],[930,1135],[950,1152],[975,1165]]],
    ["r", spanD, [[975,1165],[995,1110],[1018,968],[1040,935],[1062,930],[1085,893],[1108,1005]]],
    ["g", spanD, [[1108,1005],[1130,978]]],
    ["r", spanD, [[1130,978],[1153,927],[1175,955],[1198,938],[1220,1018],[1243,945],[1265,820],[1285,360],[1310,188],[1330,350]]],
    ["g", spanD, [[1330,350],[1350,760],[1378,1075]]],
    ["r", spanD, [[1378,1075],[1395,640],[1420,275],[1443,155],[1468,160],[1488,290]]],
    ["g", spanD, [[1488,290],[1512,265]]],
    ["r", spanD, [[1512,265],[1533,155]]],
    ["r", spanE, [[-1,155],[20,160],[40,255]]],
    ["g", spanE, [[40,255],[65,245],[88,415],[108,485],[132,485]]],
    ["r", spanE, [[132,485],[175,460],[198,405],[220,430],[242,480],[262,375],[285,455]]],
    ["g", spanE, [[285,455],[310,720],[330,1010],[352,1118],[375,1155],[396,1135],[418,1160],[430,1165],[528,1168]]],
    ["r", spanE, [[528,1168],[550,1140],[572,1160]]],
    ["g", spanE, [[572,1160],[590,1165],[615,1165]]],
    ["r", spanE, [[615,1165],[635,1115],[657,1030],[685,1010],[705,1015],[720,1025]]],
    ["g", spanE, [[720,1025],[745,1075]]],
    ["r", spanE, [[745,1075],[770,940],[790,520],[810,240],[832,145],[860,110],[880,97],[900,97],[915,170]]],
    ["g", spanE, [[915,170],[940,275],[968,305]]],
    ["r", spanE, [[968,305],[985,165],[1010,115],[1030,103],[1052,185]]],
    ["g", spanE, [[1052,185],[1075,290],[1097,300]]],
    ["r", spanE, [[1097,300],[1118,210],[1130,600],[1140,845]]],
    ["g", spanE, [[1140,845],[1162,1065],[1185,1135],[1210,1160],[1250,1165]]],
    ["r", spanE, [[1250,1165],[1270,1150],[1315,1080],[1335,1093]]]
];

const oscSignal = [
    ...t(spanD, [[10,1185],[30,1175],[55,1172],[75,1160],[100,1050],[122,932],[145,935],[170,950],[190,1002],[200,840],[215,600],[233,280],[255,170],[280,125],[325,100],[340,235],[352,330],[370,410],[413,318],[437,390],[458,325],[480,170],[502,122],[526,148],[545,405],[570,368],[595,380],[638,165],[660,270],[668,500],[685,860],[705,950],[725,1070],[750,1085],[772,1140],[795,1005],[815,688],[840,860],[850,1100],[860,1268],[875,1060],[884,960],[905,1060],[930,1218],[975,1180],[995,1110],[1018,968],[1040,935],[1062,930],[1085,893],[1108,1058],[1153,927],[1175,958],[1198,938],[1220,1058],[1243,945],[1265,820],[1285,360],[1310,188],[1335,440],[1340,740],[1350,1150],[1355,1310],[1378,1385],[1385,1240],[1395,640],[1420,275],[1443,155],[1468,160],[1488,385],[1512,265],[1533,155]]),
    ...t(spanE, [[-1,155],[20,160],[45,320],[65,265],[88,530],[108,590],[132,495],[175,460],[198,405],[220,430],[242,525],[262,375],[285,455],[300,720],[318,1060],[330,1303],[352,1295],[396,1135],[420,1170],[440,1178],[480,1168],[528,1168],[550,1140],[572,1165],[600,1178],[615,1165],[635,1115],[657,1030],[685,1010],[705,1015],[720,1030],[745,1118],[770,940],[790,520],[810,240],[832,145],[880,97],[900,97],[915,240],[940,360],[965,340],[985,165],[1010,115],[1030,103],[1052,240],[1075,398],[1097,345],[1118,210],[1130,660],[1138,1050],[1140,1250],[1163,1420],[1180,1280],[1205,1195],[1250,1165],[1270,1150]])
];

const oscTop = [
    ...t(spanD, [[10,205],[325,205],[345,420],[368,205],[503,205],[526,420],[547,205],[1310,205],[1330,420],[1353,205],[1533,205]]),
    ...t(spanE, [[0,205],[22,420],[45,205],[900,205],[922,420],[943,205],[1030,205],[1052,420],[1075,205],[1338,205]])
];

function drawSub() {
    let s = "";
    [904, 976, 1047, 1119, 1191].forEach(y => s += hline(y + 0.5, 0, 1710, "#a80000", "1 4"));
    s += hline(832.5, 0, 1710, "#a00000", "2 8");
    s += hline(832.5, 0, 1710, "#00a000", "2 8", 5);
    s += hline(1011.5, 6, 1660, "#c8c8c8", "2 10.85");
    s += hline(1137.5, 6, 1660, "#c8c8c8", "2 10.85");

    // yellow blocks and white ticks along the top
    [[127,66],[270,26],[360,14],[746,13],[810,25],[1361,53],[1452,38]].forEach(b => {
        s += `<rect x="${b[0]}" y="821" width="${b[1]}" height="9" fill="#ffff00"/>`;
    });
    for (let k = 0; k < 25; k++) {
        s += `<rect x="${Math.round(68 + 64.25 * k)}" y="829" width="7" height="7" fill="#fff"/>`;
    }
    [[12,39],[1081,115],[1207,41],[1542,91]].forEach(b => {
        s += `<rect x="${b[0]}" y="1219" width="${b[1]}" height="8" fill="#00ff00"/>`;
    });

    s += line(oscSignal, "#f0e000", 1.3);
    oscRuns.forEach(r => s += line(t(r[1], r[2]), r[0] === "r" ? "#ff0000" : "#00e800", 2.6));
    s += line(t(spanE, [[770,1060],[790,632],[812,1060]]), "#ffff00", 2.5);
    s += line(oscTop, "#00ffff", 3);
    s += line([[6,1155],[1665,1155]], "#0000ff", 3);

    s += `<path d="M1711 792V1281" stroke="#b00000" stroke-width="2"/>`;
    for (let v = 0; v <= 100; v += 10) {
        const y = Math.round(1191 - v * 3.59) + 0.5;
        s += `<path d="M1712 ${y}H${v % 20 === 0 ? 1720 : 1716}" stroke="#b00000"/>`;
    }
    [[100,"100.0",832],[80,"80.00",904],[60,"60.00",976],[40,"40.00",1047],[20,"20.00",1119],[0,"0.00",1191]].forEach(a => {
        s += label(1778, a[2] + 6.5, a[1], "#c42020", 'text-anchor="end"');
    });
    s += label(1663, 839, "顶", "#00c000");
    s += label(1663, 1018, "中", "#e8e8e8");
    s += label(1663, 1144, "底", "#d02020");

    document.getElementById("subSvg").innerHTML = s;
}

// tick list: time, price, volume, side, count
const ticks = [
    ["14:56","27.45","16.7","S",9],["14:56","27.45","6.0","S",5],["14:56","27.46","36.5","B",15],["14:56","27.45","8.2","",6],
    ["14:56","27.46","32.1","B",19],["14:56","27.46","9.1","S",4],["14:56","27.46","3.3","S",3],["14:56","27.46","1.1","S",1],
    ["14:56","27.47","5.5","B",10],["14:56","27.46","3.8","S",3],["14:56","27.46","2.5","S",1],["14:56","27.46","6.6","B",3],
    ["14:56","27.46","4.4","B",3],["14:56","27.46","1.9","B",4],["14:56","27.45","6.6","S",5],["14:56","27.46","13.7","B",3],
    ["14:57","27.45","0.3","S",1],["14:57","27.46","0.5","B",1],["15:00","27.45","451.0","",187]
];

document.getElementById("ticks").innerHTML = ticks.map(k => {
    const vol = k[4] > 100 ? "m" : "v";
    const side = k[3] === "B" ? "r" : "g";
    return `<div><b class="t">${k[0]}</b><b class="g">${k[1]}</b><b class="${vol}">${k[2]}<s>万</s></b><b class="bs ${side}">${k[3]}</b><b class="n">${k[4]}</b></div>`;
}).join("");

drawMain();
drawSub();
```
